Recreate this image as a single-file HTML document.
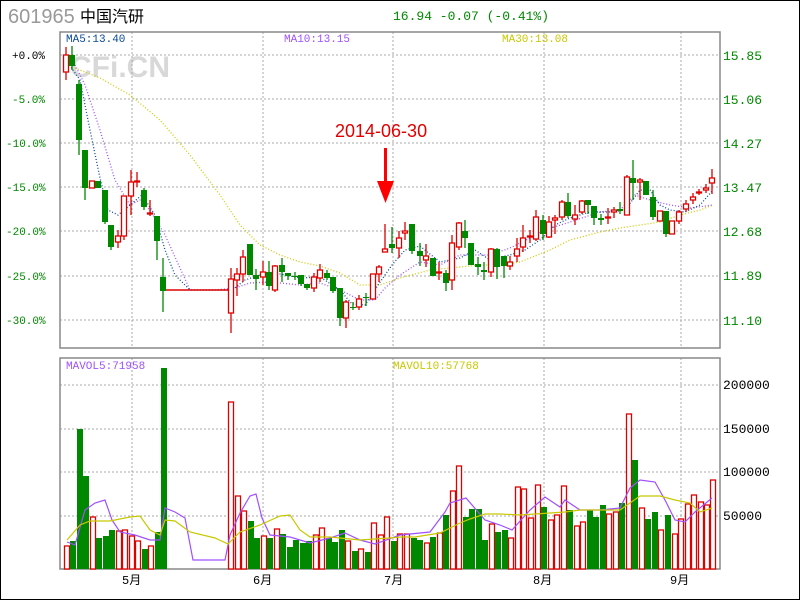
<!DOCTYPE html>
<html><head><meta charset="utf-8"><style>
html,body{margin:0;padding:0;background:#fff;}
#w{position:relative;width:798px;height:598px;border:1px solid #000;overflow:hidden;background:#fff}
svg{position:absolute;left:-1px;top:-1px}
</style></head><body><div id="w">
<svg id="s" width="800" height="600" xmlns="http://www.w3.org/2000/svg" font-family="Liberation Mono, monospace">
<text x="8" y="23" font-family="Liberation Sans, sans-serif" font-size="20" fill="#999">601965</text>
<text x="80" y="22" font-family="Liberation Sans, Noto Sans CJK SC, sans-serif" font-size="16" fill="#000">中国汽研</text>
<text x="393" y="20" font-size="13" fill="#008800" xml:space="preserve">16.94 -0.07 (-0.41%)</text>
<text x="70" y="77" font-family="Liberation Sans, sans-serif" font-weight="bold" font-size="30" fill="#d8d8d8">CFi.CN</text>
<g id="grid"></g>
<rect x="60" y="32" width="660" height="316" fill="none" stroke="#888" stroke-width="1.5"/>
<rect x="60" y="358" width="660" height="211" fill="none" stroke="#888" stroke-width="1.5"/>
<g id="ma"></g><g id="c"></g><g id="v"></g>
<text x="66" y="42" font-size="11" fill="#0a4a9a">MA5:13.40</text>
<text x="284" y="42" font-size="11" fill="#a050ff">MA10:13.15</text>
<text x="502" y="42" font-size="11" fill="#c8c800">MA30:13.08</text>
<text x="66" y="369" font-size="11" fill="#a050ff">MAVOL5:71958</text>
<text x="393" y="369" font-size="11" fill="#c8c800">MAVOL10:57768</text>
<text x="335" y="137" font-family="Liberation Sans, sans-serif" font-size="18" fill="#e00000">2014-06-30</text>
<rect x="384" y="148" width="3" height="35" fill="#f00"/>
<polygon points="377,181 394,181 385.5,203" fill="#f00"/>
<g font-size="11">
<text x="12" y="59" fill="#000">+0.0%</text>
<text x="12" y="103" fill="#008800">-5.0%</text>
<text x="6" y="147" fill="#008800">-10.0%</text>
<text x="6" y="191" fill="#008800">-15.0%</text>
<text x="6" y="235" fill="#008800">-20.0%</text>
<text x="6" y="280" fill="#008800">-25.0%</text>
<text x="6" y="324" fill="#008800">-30.0%</text>
</g>
<g font-size="13" fill="#008800">
<text x="723" y="60">15.85</text><text x="723" y="104">15.06</text><text x="723" y="148">14.27</text>
<text x="723" y="192">13.47</text><text x="723" y="236">12.68</text><text x="723" y="280">11.89</text><text x="723" y="325">11.10</text>
</g>
<g font-size="13" fill="#000">
<text x="723" y="389">200000</text><text x="723" y="433">150000</text><text x="723" y="476">100000</text><text x="723" y="520">50000</text>
</g>
<g font-size="12" fill="#000" font-family="Liberation Mono, Noto Sans CJK SC, monospace">
<text x="122" y="584">5月</text><text x="253" y="584">6月</text><text x="384" y="584">7月</text><text x="533" y="584">8月</text><text x="670" y="584">9月</text>
</g>
</svg></div>
<script>
var NS="http://www.w3.org/2000/svg";
function el(p,t,a){var e=document.createElementNS(NS,t);for(var k in a)e.setAttribute(k,a[k]);document.getElementById(p).appendChild(e);return e;}
[132,263,393,544,681].forEach(function(x){
 el("grid","line",{x1:x,y1:32,x2:x,y2:348,stroke:"#aaa","stroke-dasharray":"2,2"});
 el("grid","line",{x1:x,y1:358,x2:x,y2:569,stroke:"#aaa","stroke-dasharray":"2,2"});});
[55,99,143,187,231,276,320].forEach(function(y){el("grid","line",{x1:60,y1:y,x2:720,y2:y,stroke:"#aaa","stroke-dasharray":"2,2"});});
[385,429,472,516].forEach(function(y){el("grid","line",{x1:60,y1:y,x2:720,y2:y,stroke:"#aaa","stroke-dasharray":"2,2"});});
function pl(p,pts,col,dash,w){el(p,"polyline",{points:pts,fill:"none",stroke:col,"stroke-width":w||1.3,"stroke-dasharray":dash||""});}
pl("ma","75,68 100,78 130,95 160,120 190,155 220,195 240,225 260,245 280,255 300,262 320,266 340,273 360,285 380,285 400,278 430,270 450,268 480,265 500,265 520,262 550,250 570,240 600,232 620,228 640,225 660,222 680,215 700,210 713,205","#cccc00","1,2");
pl("ma","75,65 85,85 100,130 115,180 130,205 140,200 150,210 165,235 190,290 215,290 235,288 250,283 270,282 300,285 320,283 340,290 360,300 375,300 385,288 400,275 420,262 440,265 460,255 490,255 510,248 530,238 545,230 570,222 600,212 620,210 635,195 650,200 670,205 690,208 713,205","#a050ff","1,2");
pl("ma","66,60 80,80 90,130 100,178 108,210 118,215 130,205 142,195 155,215 165,250 175,275 190,290 232,290 245,280 260,275 280,274 300,278 320,277 340,290 352,304 365,305 378,285 392,265 405,250 420,246 440,262 460,258 475,250 490,260 500,257 510,255 525,250 540,240 555,225 570,218 590,212 610,212 625,210 640,190 650,190 660,205 670,210 685,212 700,205 713,190","#0a4a9a","1,2");
el("c","line",{x1:166,y1:290,x2:229,y2:290,stroke:"#d00","stroke-width":1.5});
var C=[[66,'r',55,72,47,80],[72,'g',55,66,46,70],[79,'g',84,140,80,155],[85,'g',150,188,150,200],[92,'r',181,188,181,188],[98,'g',181,188,181,188],[105,'g',190,222,190,224],[111,'g',225,247,225,250],[118,'r',236,242,230,248],[124,'r',196,236,196,240],[131,'r',182,196,170,215],[137,'r',181,182,172,187],[144,'g',190,207,188,210],[150,'r',213,214,200,216],[157,'g',216,241,216,260],[163,'g',277,291,258,312],
[231,'r',279,313,268,333],[237,'r',274,280,268,296],[243,'r',257,274,250,282],[250,'g',244,275,244,275],[256,'g',275,279,269,290],[263,'r',272,277,261,285],[269,'g',272,286,261,290],[275,'r',266,290,265,292],[282,'g',265,272,258,282],[288,'g',273,276,273,280],[295,'g',276,277,272,280],[301,'g',275,284,275,286],[307,'g',284,288,284,290],[314,'r',277,288,273,292],[320,'r',270,278,264,282],[327,'g',273,278,270,280],[333,'g',277,291,277,293],[340,'g',288,318,288,326],[346,'r',302,318,300,328],[353,'g',307,308,302,310],[359,'r',299,307,295,310],[366,'g',297,298,293,306],[373,'r',274,299,274,299],[379,'r',267,274,265,282],[385,'r',249,252,224,252],[392,'g',244,248,227,253],[399,'r',238,248,231,258],[405,'r',231,233,222,240],[412,'g',224,251,224,254],[420,'g',251,256,243,266],[426,'r',256,260,244,267],[433,'g',258,276,258,276],[439,'r',272,273,262,280],[446,'g',273,283,270,291],[452,'r',243,280,235,290],[459,'r',223,247,222,250],[465,'g',231,238,220,248],[471,'g',243,265,243,265],[478,'g',264,267,257,275],[484,'g',270,272,262,280],[491,'r',249,272,248,277],[497,'g',249,267,248,279],[504,'g',256,266,256,278],[510,'r',262,266,256,270],[517,'r',249,256,238,262],[523,'r',238,247,225,252],[530,'r',236,237,230,243],[536,'r',217,239,210,241],[543,'g',220,234,215,240],[549,'r',222,237,216,238],[555,'r',218,220,215,234],[562,'r',202,217,200,220],[568,'g',202,216,193,218],[575,'r',215,219,205,225],[582,'r',201,212,200,214],[588,'g',200,205,200,214],[594,'g',206,218,206,225],[601,'g',218,220,214,225],[608,'r',217,218,208,224],[614,'r',210,212,207,218],[620,'g',209,211,202,214],[627,'r',177,215,175,215],[633,'g',178,183,160,200],[640,'r',180,182,178,200],[646,'g',181,195,181,195],[653,'g',197,217,190,220],[660,'r',211,221,211,221],[666,'g',211,234,211,237],[672,'r',221,234,221,234],[679,'r',212,221,210,224],[686,'r',204,209,200,212],[693,'r',197,200,193,204],[699,'r',192,193,189,195],[706,'r',188,190,184,193],[712,'r',178,183,169,194]];
C.forEach(function(c){var col=c[1]=='r'?'#d00':'#080';
 el("c","line",{x1:c[0],y1:c[4],x2:c[0],y2:c[5],stroke:col,"stroke-width":1.3});
 var h=Math.max(c[3]-c[2],1);
 if(c[1]=='r')el("c","rect",{x:c[0]-2.5,y:c[2],width:5,height:h,fill:"#fff",stroke:col,"stroke-width":1.3});
 else el("c","rect",{x:c[0]-3,y:c[2],width:6,height:h,fill:col});});
var V=[[64,'r',546],[70,'g',541],[77,'g',429],[83,'g',476],[90,'r',517],[96,'g',538],[103,'g',536],[109,'g',530],[116,'r',531],[122,'r',530],[129,'r',536],[135,'r',541],[142,'g',549],[148,'r',546],[155,'g',532],[161,'g',368],
[228,'r',402],[235,'r',496],[241,'r',511],[248,'g',521],[254,'g',538],[261,'r',536],[267,'g',538],[274,'r',529],[280,'g',534],[287,'g',547],[293,'g',540],[300,'g',543],[306,'g',541],[313,'r',535],[319,'r',528],[326,'g',538],[332,'g',542],[339,'g',530],[345,'r',541],[352,'g',551],[358,'r',549],[365,'g',552],[371,'r',523],[378,'r',535],[384,'r',517],[391,'g',541],[397,'r',534],[404,'r',534],[411,'g',538],[417,'g',540],[424,'r',543],[430,'g',537],[437,'r',533],[443,'g',515],[450,'r',491],[456,'r',466],[463,'g',517],[469,'g',509],[476,'g',509],[482,'g',540],[489,'r',524],[495,'g',532],[502,'g',530],[508,'r',538],[515,'r',487],[521,'r',489],[528,'r',518],[535,'r',485],[541,'g',507],[548,'r',520],[554,'r',515],[561,'r',486],[567,'g',510],[574,'r',526],[580,'r',522],[587,'g',510],[593,'g',517],[600,'g',505],[606,'r',514],[613,'r',512],[619,'g',503],[626,'r',414],[632,'g',460],[639,'r',508],[645,'g',519],[652,'g',512],[658,'r',530],[665,'g',515],[672,'r',534],[678,'r',519],[685,'r',504],[691,'r',495],[698,'r',502],[704,'r',505],[710,'r',480]];
V.forEach(function(v){if(v[1]=='r')el("v","rect",{x:v[0]+0.5,y:v[2],width:5,height:569-v[2],fill:"#fff",stroke:"#d00","stroke-width":1.3});
 else el("v","rect",{x:v[0],y:v[2],width:6,height:569-v[2],fill:"#080"});});
pl("v","67,542 75,545 85,510 95,503 105,500 112,520 120,532 135,535 150,540 160,540 165,508 175,512 185,518 193,560 225,560 230,535 240,513 250,496 256,494 262,518 270,535 290,537 310,543 330,538 345,533 360,540 375,544 400,535 430,532 445,512 450,503 466,498 485,520 500,525 512,530 530,510 545,497 560,507 565,500 580,510 600,510 620,508 630,488 640,480 655,482 665,500 675,520 685,522 695,512 712,498","#a050ff","",1.2);
pl("v","67,540 80,525 90,521 110,521 130,517 140,516 150,530 160,535 165,520 175,521 190,532 215,538 228,544 240,532 260,525 280,516 290,515 300,530 310,537 330,537 360,540 390,538 400,537 415,537 440,533 460,523 470,519 485,514 500,514 520,515 550,513 565,512 580,510 600,510 620,510 640,496 660,496 675,500 690,503 700,512 712,508","#c8c800","",1.2);
</script>
</body></html>
